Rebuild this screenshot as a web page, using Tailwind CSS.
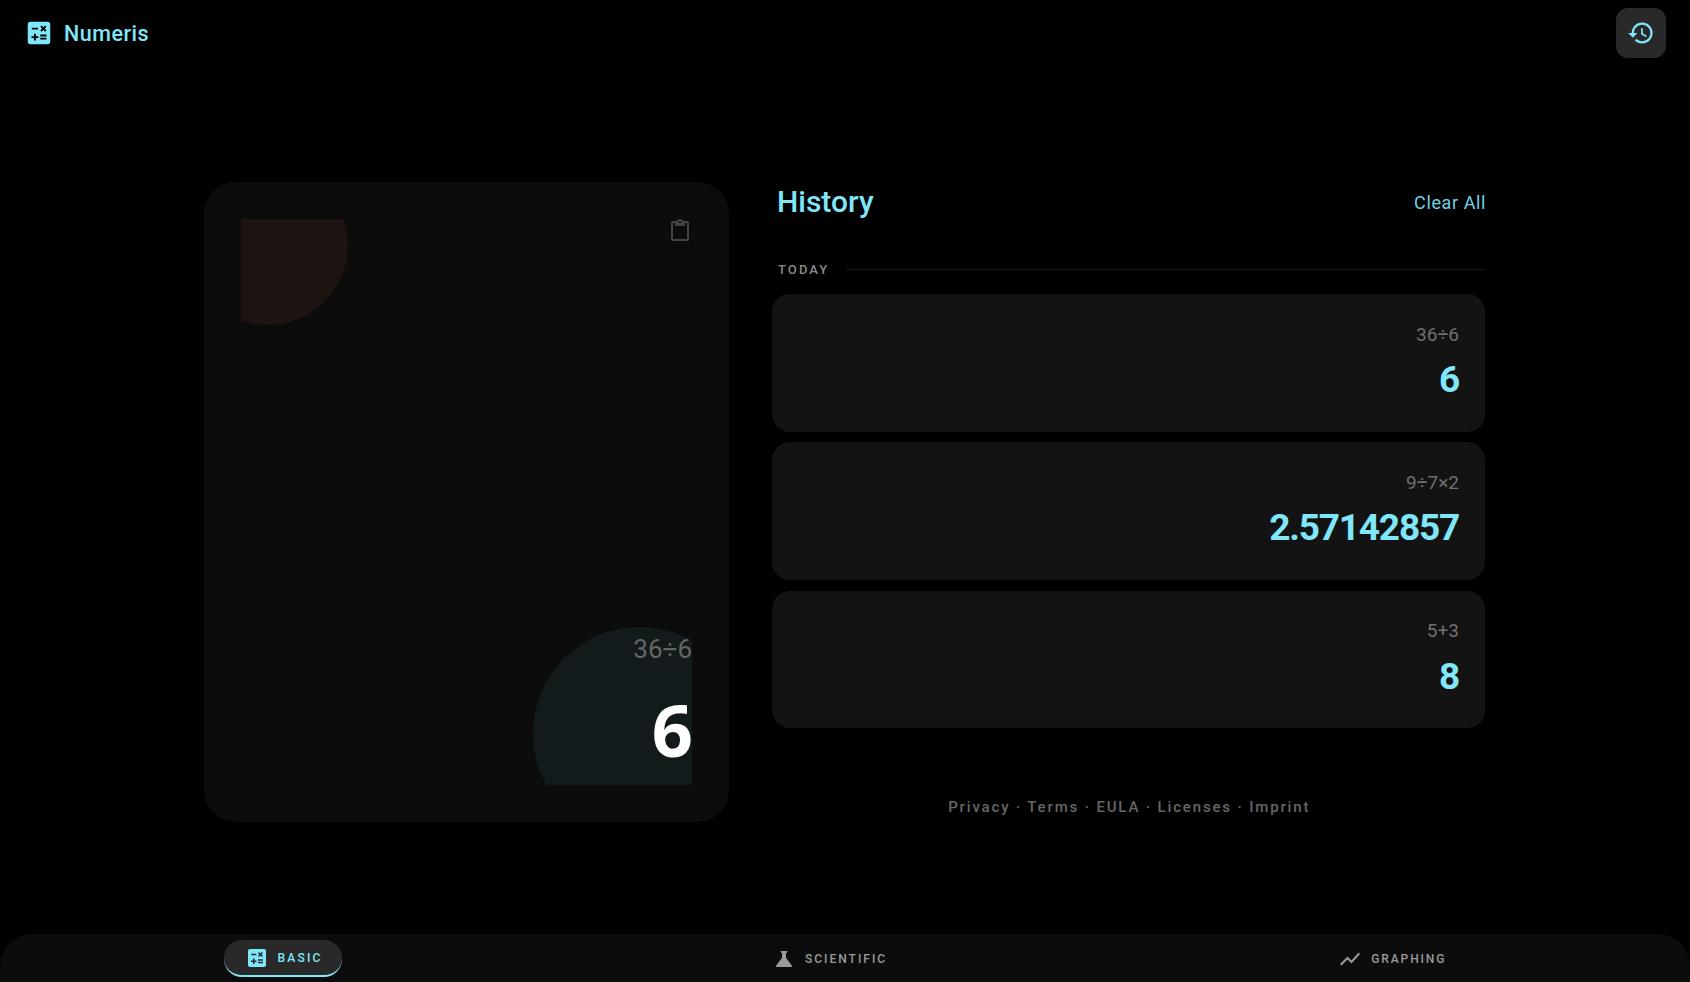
<!doctype html>
<html lang="en">
<head>
<meta charset="utf-8">
<title>Numeris</title>
<script src="https://cdn.jsdelivr.net/npm/@tailwindcss/browser@4"></script>
</head>
<body class="bg-black font-['Roboto',sans-serif] overflow-hidden">
<div class="flex h-[982px] w-[1690px] flex-col overflow-hidden bg-black">
  <header class="flex h-[66px] shrink-0 items-center justify-between pl-[24px] pr-[24px]">
    <div class="flex items-center gap-[10px] text-[#80e6f9]">
      <svg class="size-[30px]" viewBox="0 0 24 24" fill="currentColor"><path d="M19,3H5C3.9,3,3,3.9,3,5v14c0,1.1,0.9,2,2,2h14c1.1,0,2-0.9,2-2V5C21,3.9,20.1,3,19,3z M13.03,7.06L14.09,6l1.41,1.41L16.91,6l1.06,1.06l-1.41,1.41l1.41,1.41l-1.06,1.06L15.5,9.54l-1.41,1.41l-1.06-1.06l1.41-1.41L13.03,7.06z M6.25,7.72h5v1.5h-5V7.72z M11.5,16h-2v2H8v-2H6v-1.5h2v-2h1.5v2h2V16z M18,17.25h-5v-1.5h5V17.25z M18,14.75h-5v-1.5h5V14.75z"/></svg>
      <span class="mt-[2px] text-[21.5px] font-medium tracking-[0.5px]">Numeris</span>
    </div>
    <button class="flex size-[50px] items-center justify-center rounded-[12px] bg-[#292929] text-[#80e6f9]">
      <svg class="size-[28px]" viewBox="0 0 24 24" fill="currentColor"><path d="M13 3c-4.97 0-9 4.03-9 9H1l3.89 3.89.07.14L9 12H6c0-3.87 3.13-7 7-7s7 3.13 7 7-3.13 7-7 7c-1.93 0-3.68-.79-4.94-2.06l-1.42 1.42C8.27 19.99 10.51 21 13 21c4.97 0 9-4.03 9-9s-4.03-9-9-9zm-1 5v5l4.28 2.54.72-1.21-3.5-2.08V8H12z"/></svg>
    </button>
  </header>

  <main class="flex flex-1 items-start gap-[42.5px] pl-[204px] pt-[116px]">
    <section class="h-[640px] w-[525px] shrink-0 rounded-[32px] bg-[#0c0c0c] p-[37px]">
      <div class="relative flex h-full flex-col items-end justify-end overflow-hidden">
        <div class="absolute -left-[53px] -top-[54px] size-[160px] rounded-full bg-[#1d1310]"></div>
        <div class="absolute -bottom-[55px] -right-[54px] size-[213px] rounded-full bg-[#121a1b]"></div>
        <svg class="absolute right-[0px] top-0 size-[24px] text-[#444444]" viewBox="0 0 24 24" fill="currentColor"><path d="M19 2h-4.18C14.4.84 13.3 0 12 0c-1.3 0-2.4.84-2.82 2H5c-1.1 0-2 .9-2 2v16c0 1.1.9 2 2 2h14c1.1 0 2-.9 2-2V4c0-1.1-.9-2-2-2zm-7 0c.55 0 1 .45 1 1s-.45 1-1 1-1-.45-1-1 .45-1 1-1zm7 18H5V4h2v3h10V4h2v16z"/></svg>
        <div class="relative text-[26px] leading-[32px] text-[#666666]">36÷6</div>
        <div class="relative mb-[11px] mr-[-1px] mt-[19px] font-['Noto_Sans',sans-serif] text-[72px] font-bold leading-[90px] text-white">6</div>
      </div>
    </section>

    <section class="w-[713.5px] shrink-0">
      <div class="flex h-[38px] items-center justify-between pl-[5.5px]">
        <h1 class="text-[30px] font-medium text-[#80e6f9]">History</h1>
        <button class="mr-[-1px] mt-[2px] text-[18px] tracking-[0.6px] text-[#72d3e5]">Clear All</button>
      </div>
      <div class="mt-[40px] flex h-[20px] items-center gap-[16.5px] pl-[6.5px]">
        <span class="text-[13px] font-medium tracking-[2.1px] text-[#8a8a8a]">TODAY</span>
        <div class="-mt-[2px] h-px flex-1 bg-[#161616]"></div>
      </div>
      <div class="mt-[14px] flex flex-col gap-[10.75px]">
        <article class="flex h-[137.5px] flex-col items-end rounded-[18px] bg-[#131313] pr-[26px] pt-[28.5px]">
          <div class="text-[19px] leading-[24px] text-[#707070]">36÷6</div>
          <div class="mt-[11.5px] text-[37px] font-bold leading-[44px] tracking-[-1.2px] text-[#80e6f9]">6</div>
        </article>
        <article class="flex h-[137.5px] flex-col items-end rounded-[18px] bg-[#131313] pr-[26px] pt-[28.5px]">
          <div class="text-[19px] leading-[24px] text-[#707070]">9÷7×2</div>
          <div class="mt-[11.5px] text-[37px] font-bold leading-[44px] tracking-[-1.2px] text-[#80e6f9]">2.57142857</div>
        </article>
        <article class="flex h-[137.5px] flex-col items-end rounded-[18px] bg-[#131313] pr-[26px] pt-[28.5px]">
          <div class="text-[19px] leading-[24px] text-[#707070]">5+3</div>
          <div class="mt-[11.5px] text-[37px] font-bold leading-[44px] tracking-[-1.2px] text-[#80e6f9]">8</div>
        </article>
      </div>
      <footer class="mt-[68.5px] pl-[2px] text-center text-[15px] font-medium leading-[20px] tracking-[1.85px] text-[#666666]">Privacy · Terms · EULA · Licenses · Imprint</footer>
    </section>
  </main>

  <nav class="flex h-[48px] shrink-0 items-start gap-[409px] rounded-t-[32px] bg-[#0c0c0c] pl-[224px] pt-[6px]">
    <button class="flex h-[37px] w-[118px] items-center gap-[8.5px] rounded-[18px] border-b-2 border-[#80e6f9] bg-[#292929] pl-[21px] text-[#80e6f9]">
      <svg class="size-[24px] shrink-0" viewBox="0 0 24 24" fill="currentColor"><path d="M19,3H5C3.9,3,3,3.9,3,5v14c0,1.1,0.9,2,2,2h14c1.1,0,2-0.9,2-2V5C21,3.9,20.1,3,19,3z M13.03,7.06L14.09,6l1.41,1.41L16.91,6l1.06,1.06l-1.41,1.41l1.41,1.41l-1.06,1.06L15.5,9.54l-1.41,1.41l-1.06-1.06l1.41-1.41L13.03,7.06z M6.25,7.72h5v1.5h-5V7.72z M11.5,16h-2v2H8v-2H6v-1.5h2v-2h1.5v2h2V16z M18,17.25h-5v-1.5h5V17.25z M18,14.75h-5v-1.5h5V14.75z"/></svg>
      <span class="text-[12px] font-medium tracking-[2.2px]">BASIC</span>
    </button>
    <button class="flex h-[37px] items-center gap-[9px] pl-[21px] pr-[20px] text-[#9a9a9a]">
      <svg class="size-[24px] shrink-0" viewBox="0 0 24 24" fill="currentColor"><path d="M19.8 18.4 14 10.67V6.5l1.35-1.69c.26-.33.03-.81-.39-.81H9.04c-.42 0-.65.48-.39.81L10 6.5v4.17L4.2 18.4c-.49.66-.02 1.6.8 1.6h14c.82 0 1.29-.94.8-1.6z"/></svg>
      <span class="text-[12px] font-medium tracking-[2px]">SCIENTIFIC</span>
    </button>
    <button class="ml-[22px] flex h-[37px] items-center gap-[9px] text-[#9a9a9a]">
      <svg class="size-[24px] shrink-0" viewBox="0 0 24 24" fill="currentColor"><path d="M3.5 18.49l6-6.01 4 4L22 6.92l-1.41-1.41-7.09 7.97-4-4L2 16.99z"/></svg>
      <span class="text-[12px] font-medium tracking-[1.9px]">GRAPHING</span>
    </button>
  </nav>
</div>
</body>
</html>
